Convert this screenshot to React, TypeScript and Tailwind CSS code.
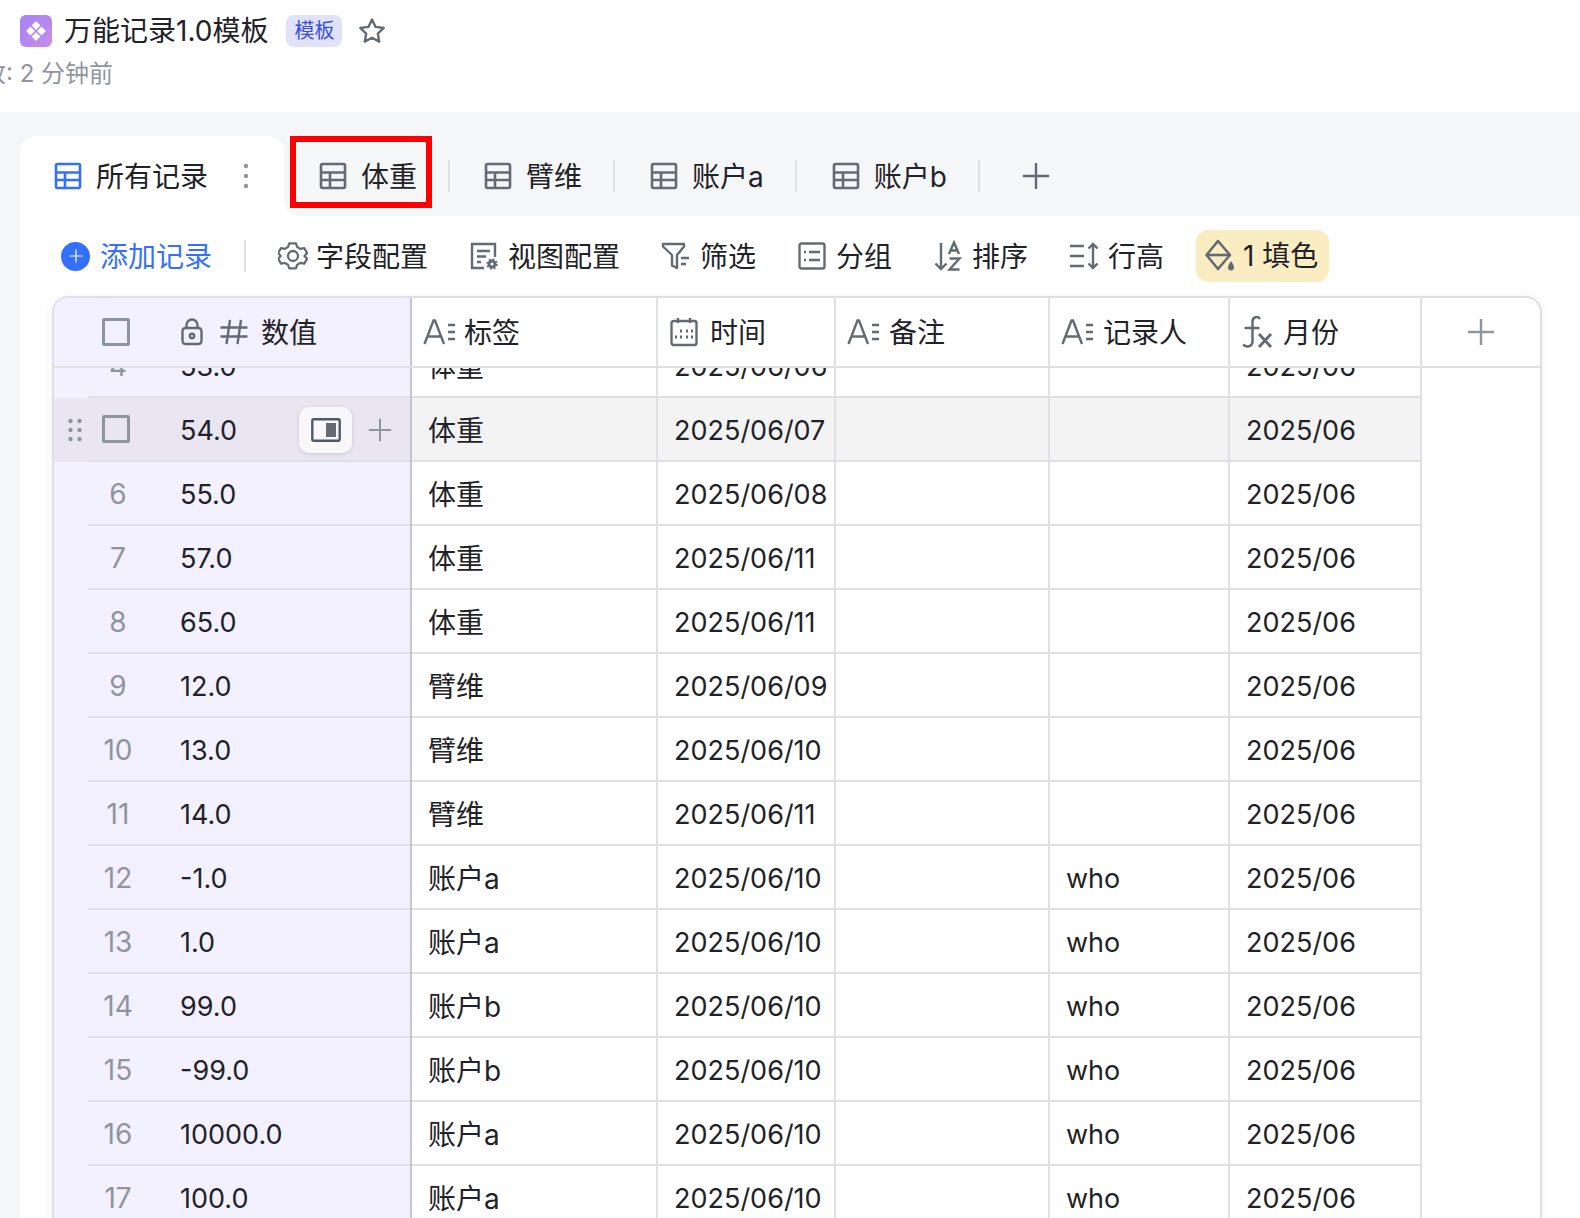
import React from "react";

type IconProps = { className?: string };

const TableIcon = ({ className = "text-[#646a73]" }: IconProps) => (
  <svg width="28" height="28" viewBox="0 0 28 28" fill="none" stroke="currentColor" strokeWidth="2.6" className={className}>
    <rect x="2" y="2" width="24" height="24" rx="1.5" />
    <path d="M2 10.5h24M2 18h24M11 10.5V26" />
  </svg>
);

const PlusIcon = ({ size = 28, className = "text-[#646a73]" }: IconProps & { size?: number }) => (
  <svg width={size} height={size} viewBox="0 0 28 28" fill="none" stroke="currentColor" strokeWidth="2.4" className={className}>
    <path d="M14 1v26M1 14h26" />
  </svg>
);

const TextFieldIcon = () => (
  <svg width="33" height="28" viewBox="0 0 33 28" fill="none" stroke="#646a73" strokeWidth="2.4" className="shrink-0">
    <path d="M1.5 26 10.5 2.5h1.500L21 26M5 18.5h13M25 7h7M25 14h7M25 21h7" />
  </svg>
);

const StarIcon = () => (
  <svg width="28" height="28" viewBox="0 0 28 28" fill="none" stroke="#646a73" strokeWidth="2.4" strokeLinejoin="round">
    <path d="M14 2.5l3.6 7.4 8.1 1.1-5.9 5.6 1.5 8-7.3-3.9-7.3 3.9 1.5-8L2.300 11l8.100-1.100z" />
  </svg>
);

const GearIcon = () => (
  <svg width="30" height="30" viewBox="0 0 30 30" fill="none" stroke="#646a73" strokeWidth="2.300" strokeLinejoin="round">
    <path d="M11.500 2.500h7l1.300 3.800 3.300 1.900 4-.8 3 5.100-2.700 3 0 .1 2.700 3-3 5-4-.8-3.300 1.900-1.300 3.800h-7l-1.300-3.800-3.300-1.900-4 .8-3-5 2.700-3v-.1l-2.700-3 3-5.100 4 .8 3.300-1.900z" transform="translate(0.200 0) scale(0.96)" />
    <circle cx="15" cy="15" r="5" />
  </svg>
);

const ViewConfigIcon = () => (
  <svg width="30" height="30" viewBox="0 0 30 30" fill="none" stroke="#646a73" strokeWidth="2.400">
    <path d="M15 27H3V3h23v13" />
    <path d="M8 10h13M8 15.500h9M8 21h4" />
    <circle cx="23" cy="23" r="3" strokeWidth="3" />
    <circle cx="23" cy="23" r="5" strokeWidth="1.500" strokeDasharray="2 1.900" />
  </svg>
);

const FilterIcon = () => (
  <svg width="30" height="30" viewBox="0 0 30 30" fill="none" stroke="#646a73" strokeWidth="2.400" strokeLinejoin="round">
    <path d="M2 3h21v2.500l-7 8.500v13l-5-2.500V14L2 5.500z" />
    <path d="M20 17h8M20 23h5" />
  </svg>
);

const GroupIcon = () => (
  <svg width="28" height="28" viewBox="0 0 28 28" fill="none" stroke="#646a73" strokeWidth="2.400">
    <rect x="1.500" y="1.500" width="25" height="25" rx="2" />
    <path d="M11 10h11M11 18h11M6 10h2M6 18h2" />
  </svg>
);

const SortIcon = () => (
  <svg width="28" height="32" viewBox="0 0 28 32" fill="none" stroke="#646a73" strokeWidth="2.400">
    <path d="M7 3v26M1.500 23.500 7 29l5.500-5.500" />
    <path d="M15 14 20 2.500 25 14M16.500 10.500h7M15.500 18.500h10L15.500 29.500h10" />
  </svg>
);

const RowHeightIcon = () => (
  <svg width="30" height="30" viewBox="0 0 30 30" fill="none" stroke="#646a73" strokeWidth="2.400">
    <path d="M1 5h14M1 15h14M1 25h14M24 3v24M19.500 7.500 24 3l4.500 4.500M19.500 22.500 24 27l4.500-4.500" />
  </svg>
);

const FillIcon = () => (
  <svg width="30" height="36" viewBox="0 0 30 36" fill="none" stroke="#646a73" strokeWidth="2.600" strokeLinejoin="round">
    <path d="M13 3 25 17 13 31 1.500 17z" />
    <path d="M2 17h22" />
    <path d="M26 23c2 3 3 4.500 3 6.500a3 3 0 0 1-6 0c0-2 1-3.500 3-6.500z" fill="#646a73" stroke="none" />
  </svg>
);

const CalendarIcon = () => (
  <svg width="28" height="30" viewBox="0 0 28 30" fill="none" stroke="#646a73" strokeWidth="2.400">
    <rect x="1.500" y="4" width="25" height="24" rx="2" />
    <path d="M8 1v5M20 1v5" />
    <path d="M10 14h2M16 14h2M21 14h2M5 20h2M10 20h2M16 20h2M21 20h2" strokeWidth="3" />
  </svg>
);

const LockIcon = () => (
  <svg width="22" height="28" viewBox="0 0 22 28" fill="none" stroke="#646a73" strokeWidth="2.400">
    <rect x="1.500" y="10" width="19" height="16" rx="3" />
    <path d="M5.500 10V7a5.500 5.500 0 0 1 11 0v3" />
    <circle cx="11" cy="18" r="2.200" />
  </svg>
);

const HashIcon = () => (
  <svg width="28" height="28" viewBox="0 0 28 28" fill="none" stroke="#646a73" strokeWidth="2.400">
    <path d="M10 2 6.500 26M21 2l-3.500 24M0.500 9.500h27M0.500 18.500h27" />
  </svg>
);

const FormulaIcon = () => (
  <svg width="32" height="34" viewBox="0 0 32 34" fill="none" stroke="#646a73" strokeWidth="2.500">
    <path d="M19 4C17 1 12 1.500 11.500 6v21c-.5 5-6 5.500-9.500 2.500M3.500 13h15" />
    <path d="M18 19l12 13M30 19 18 32" strokeWidth="2.800" />
  </svg>
);

const Checkbox = () => <div className="w-[28px] h-[28px] border-[3px] border-[#8f959e] rounded-[2px] bg-transparent shrink-0" />;

const Divider = () => <div className="w-[2px] h-[32px] bg-[#dee0e3] shrink-0" />;

const Tab = ({ label }: { label: string }) => (
  <div className="flex items-center gap-[14px]">
    <TableIcon />
    <span className="text-[28px] text-[#1f2329] leading-none pt-[2px]">{label}</span>
  </div>
);

const ToolItem = ({ icon, label, className }: { icon: React.ReactNode; label: string; className: string }) => (
  <div className={`flex items-center shrink-0 ${className}`}>
    {icon}
    <span className="text-[28px] text-[#1f2329] leading-none pt-[1px]">{label}</span>
  </div>
);

const Head = ({ icon, label, className }: { icon: React.ReactNode; label: string; className: string }) => (
  <div className={`flex items-center h-full border-r-2 border-[#dee0e3] ${className}`}>
    {icon}
    <span className="text-[28px] text-[#1f2329] leading-none pt-[2px]">{label}</span>
  </div>
);

const rows = [
  { no: "6", value: "55.0", tag: "体重", date: "2025/06/08", who: "" },
  { no: "7", value: "57.0", tag: "体重", date: "2025/06/11", who: "" },
  { no: "8", value: "65.0", tag: "体重", date: "2025/06/11", who: "" },
  { no: "9", value: "12.0", tag: "臂维", date: "2025/06/09", who: "" },
  { no: "10", value: "13.0", tag: "臂维", date: "2025/06/10", who: "" },
  { no: "11", value: "14.0", tag: "臂维", date: "2025/06/11", who: "" },
  { no: "12", value: "-1.0", tag: "账户a", date: "2025/06/10", who: "who" },
  { no: "13", value: "1.0", tag: "账户a", date: "2025/06/10", who: "who" },
  { no: "14", value: "99.0", tag: "账户b", date: "2025/06/10", who: "who" },
  { no: "15", value: "-99.0", tag: "账户b", date: "2025/06/10", who: "who" },
  { no: "16", value: "10000.0", tag: "账户a", date: "2025/06/10", who: "who" },
  { no: "17", value: "100.0", tag: "账户a", date: "2025/06/10", who: "who" },
];

const num = "text-[27px] text-[#1f2329] leading-none pt-[2px]";
const idx = "w-[60px] text-center text-[28px] text-[#8f959e] leading-none pt-[2px]";

const Cells = ({ tag, date, who, bg = "" }: { tag: string; date: string; who: string; bg?: string }) => (
  <div className={`flex h-full border-b-2 border-[#dee0e3] ${bg}`}>
    <div className="w-[246px] h-full flex items-center pl-[16px] border-r-2 border-[#dee0e3] text-[28px] text-[#1f2329] leading-none pt-[3px]">{tag}</div>
    <div className={`w-[178px] h-full flex items-center pl-[16px] border-r-2 border-[#dee0e3] ${num}`}>{date}</div>
    <div className="w-[214px] h-full border-r-2 border-[#dee0e3]" />
    <div className={`w-[180px] h-full flex items-center pl-[16px] border-r-2 border-[#dee0e3] ${num}`}>{who}</div>
    <div className={`w-[192px] h-full flex items-center pl-[16px] border-r-2 border-[#dee0e3] ${num}`}>{date.slice(0, 7)}</div>
  </div>
);

const App: React.FC = () => {
  return (
    <div
      className="w-[1580px] h-[1218px] overflow-hidden bg-[#f5f6f8]"
      style={{ fontFamily: 'Inter, "Noto Sans CJK SC", sans-serif' }}
    >
      {/* top title */}
      <div className="h-[112px] bg-white pl-[20px] overflow-hidden">
        <div className="flex items-center h-[32px] mt-[15px]">
          <div className="w-[32px] h-[32px] rounded-[6px] bg-gradient-to-br from-[#a583f5] to-[#c98ce8] flex items-center justify-center">
            <svg width="22" height="22" viewBox="0 0 22 22" fill="white" stroke="white" strokeWidth="1.200" strokeLinejoin="round">
              <path d="M11 2l3.500 3.500L11 9 7.500 5.500zM5.500 7.500 9 11l-3.500 3.500L2 11zM16.500 7.500 20 11l-3.500 3.500L13 11zM11 13l3.500 3.500L11 20l-3.500-3.500z" />
            </svg>
          </div>
          <span className="ml-[12px] text-[28px] leading-none text-[#1f2329]">万能记录1.0模板</span>
          <span className="ml-[18px] w-[56px] h-[32px] rounded-[8px] bg-[#e0e2fa] text-[#3c4fd6] text-[20px] leading-none flex items-center justify-center">模板</span>
          <span className="ml-[16px] flex"><StarIcon /></span>
        </div>
        <div className="mt-[13px] -ml-[62px] text-[24px] leading-[28px] text-[#8f959e] whitespace-nowrap">修改: 2 分钟前</div>
      </div>

      <div className="pt-[24px] pl-[20px]">
        {/* tabs */}
        <div className="flex h-[80px]">
          <div className="w-[264px] h-full bg-white rounded-t-[16px] flex items-center pl-[34px]">
            <TableIcon className="text-[#3370ff]" />
            <span className="ml-[14px] text-[28px] text-[#1f2329] leading-none pt-[2px]">所有记录</span>
            <svg width="6" height="28" viewBox="0 0 6 28" fill="#8f959e" className="ml-[35px]">
              <circle cx="3" cy="4" r="2.200" />
              <circle cx="3" cy="14" r="2.200" />
              <circle cx="3" cy="24" r="2.200" />
            </svg>
          </div>
          <div className="flex-1 bg-[linear-gradient(to_top,white_16px,transparent_16px)]">
            <div className="h-full bg-[#f5f6f8] rounded-bl-[16px] pl-[6px] flex items-start">
              <div className="w-[142px] h-[72px] border-[6px] border-[#ff0000] flex items-center pl-[23px] pt-[8px] shrink-0">
                <Tab label="体重" />
              </div>
              <div className="flex items-center h-[80px]">
                <div className="ml-[16px]"><Divider /></div>
                <div className="ml-[34px]"><Tab label="臂维" /></div>
                <div className="ml-[31px]"><Divider /></div>
                <div className="ml-[35px]"><Tab label="账户a" /></div>
                <div className="ml-[31px]"><Divider /></div>
                <div className="ml-[35px]"><Tab label="账户b" /></div>
                <div className="ml-[31px]"><Divider /></div>
                <div className="ml-[42px]"><PlusIcon /></div>
              </div>
            </div>
          </div>
        </div>

        {/* white panel */}
        <div className="bg-white h-[1002px] overflow-hidden">
          {/* toolbar */}
          <div className="h-[80px] flex items-center pl-[41px]">
            <div className="flex items-center gap-[10px] shrink-0">
              <div className="w-[29px] h-[29px] rounded-full bg-[#3370ff] flex items-center justify-center">
                <PlusIcon size={14} className="text-white" />
              </div>
              <span className="text-[28px] text-[#3370ff] leading-none pt-[1px]">添加记录</span>
            </div>
            <div className="ml-[32px]"><Divider /></div>
            <ToolItem className="ml-[32px] gap-[8px]" icon={<GearIcon />} label="字段配置" />
            <ToolItem className="ml-[41px] gap-[9px]" icon={<ViewConfigIcon />} label="视图配置" />
            <ToolItem className="ml-[41px] gap-[9px]" icon={<FilterIcon />} label="筛选" />
            <ToolItem className="ml-[42px] gap-[10px]" icon={<GroupIcon />} label="分组" />
            <ToolItem className="ml-[42px] gap-[10px]" icon={<SortIcon />} label="排序" />
            <ToolItem className="ml-[41px] gap-[9px]" icon={<RowHeightIcon />} label="行高" />
            <div className="ml-[32px] w-[133px] h-[52px] rounded-[12px] bg-[#faedc2] flex items-center pl-[9px] gap-[8px] shrink-0">
              <FillIcon />
              <span className="text-[28px] text-[#1f2329] leading-none whitespace-nowrap">1 填色</span>
            </div>
          </div>

          {/* table */}
          <div className="ml-[32px] w-[1490px] h-[930px] border-2 border-[#dee0e3] rounded-t-[16px] overflow-hidden shadow-[0_0_12px_rgba(0,0,0,0.05)]">
            {/* head */}
            <div className="flex h-[70px] border-b-2 border-[#dee0e3]">
              <div className="w-[358px] h-full bg-[#f3f0ff] border-r-2 border-[#c4c7ce] flex items-center shrink-0">
                <div className="ml-[48px]"><Checkbox /></div>
                <div className="ml-[51px] flex"><LockIcon /></div>
                <div className="ml-[17px] flex"><HashIcon /></div>
                <span className="ml-[13px] text-[28px] text-[#1f2329] leading-none pt-[2px]">数值</span>
              </div>
              <Head className="w-[246px] pl-[11px] gap-[8px]" icon={<TextFieldIcon />} label="标签" />
              <Head className="w-[178px] pl-[12px] gap-[12px]" icon={<CalendarIcon />} label="时间" />
              <Head className="w-[214px] pl-[11px] gap-[9px]" icon={<TextFieldIcon />} label="备注" />
              <Head className="w-[180px] pl-[11px] gap-[9px]" icon={<TextFieldIcon />} label="记录人" />
              <Head className="w-[192px] pl-[11px] gap-[10px]" icon={<FormulaIcon />} label="月份" />
              <div className="flex-1 flex items-center justify-center"><PlusIcon className="text-[#8f959e]" /></div>
            </div>

            {/* partly scrolled row */}
            <div className="flex h-[30px] overflow-hidden">
              <div className="w-[358px] h-full bg-[#f3f0ff] border-r-2 border-[#c4c7ce] shrink-0 pl-[34px]">
                <div className="flex items-center h-[64px] -mt-[34px] border-b-2 border-[#dee0e3]">
                  <span className={idx}>4</span>
                  <span className={`ml-[32px] ${num}`}>53.0</span>
                </div>
              </div>
              <div className="h-[64px] -mt-[34px]"><Cells tag="体重" date="2025/06/06" who="" /></div>
            </div>

            {/* hovered row */}
            <div className="flex h-[64px]">
              <div className="w-[358px] h-full bg-[#e9e6f2] border-r-2 border-[#c4c7ce] shrink-0 flex">
                <div className="w-[34px] flex items-center pl-[14px]">
                  <svg width="14" height="24" viewBox="0 0 14 24" fill="#8f959e" className="shrink-0">
                    <circle cx="2.500" cy="3" r="2.200" /><circle cx="11.500" cy="3" r="2.200" />
                    <circle cx="2.500" cy="12" r="2.200" /><circle cx="11.500" cy="12" r="2.200" />
                    <circle cx="2.500" cy="21" r="2.200" /><circle cx="11.500" cy="21" r="2.200" />
                  </svg>
                </div>
                <div className="flex-1 flex items-center border-b-2 border-[#dee0e3]">
                  <div className="ml-[14px]"><Checkbox /></div>
                  <span className={`ml-[50px] ${num}`}>54.0</span>
                  <div className="ml-[62px] w-[53px] h-[46px] mt-[1px] rounded-[10px] bg-[#f8f8fa] shadow-[0_1px_4px_rgba(0,0,0,0.12)] flex items-center justify-center">
                    <svg width="30" height="24" viewBox="0 0 30 24" fill="none">
                      <rect x="1.300" y="1.300" width="27.400" height="21.400" rx="1.500" stroke="#4e5969" strokeWidth="2.400" />
                      <rect x="15" y="5" width="10" height="14" fill="#646a73" />
                    </svg>
                  </div>
                  <div className="ml-[16px] mt-[1px] flex"><PlusIcon size={24} className="text-[#8f959e]" /></div>
                </div>
              </div>
              <div className="h-full"><Cells tag="体重" date="2025/06/07" who="" bg="bg-[#f3f3f4]" /></div>
            </div>

            {rows.map((row) => (
              <div className="flex h-[64px]" key={row.no}>
                <div className="w-[358px] h-full bg-[#f3f0ff] border-r-2 border-[#c4c7ce] shrink-0 pl-[34px]">
                  <div className="flex items-center h-full border-b-2 border-[#dee0e3]">
                    <span className={idx}>{row.no}</span>
                    <span className={`ml-[32px] ${num}`}>{row.value}</span>
                  </div>
                </div>
                <div className="h-full"><Cells tag={row.tag} date={row.date} who={row.who} /></div>
              </div>
            ))}
          </div>
        </div>
      </div>
    </div>
  );
};

export default App;
